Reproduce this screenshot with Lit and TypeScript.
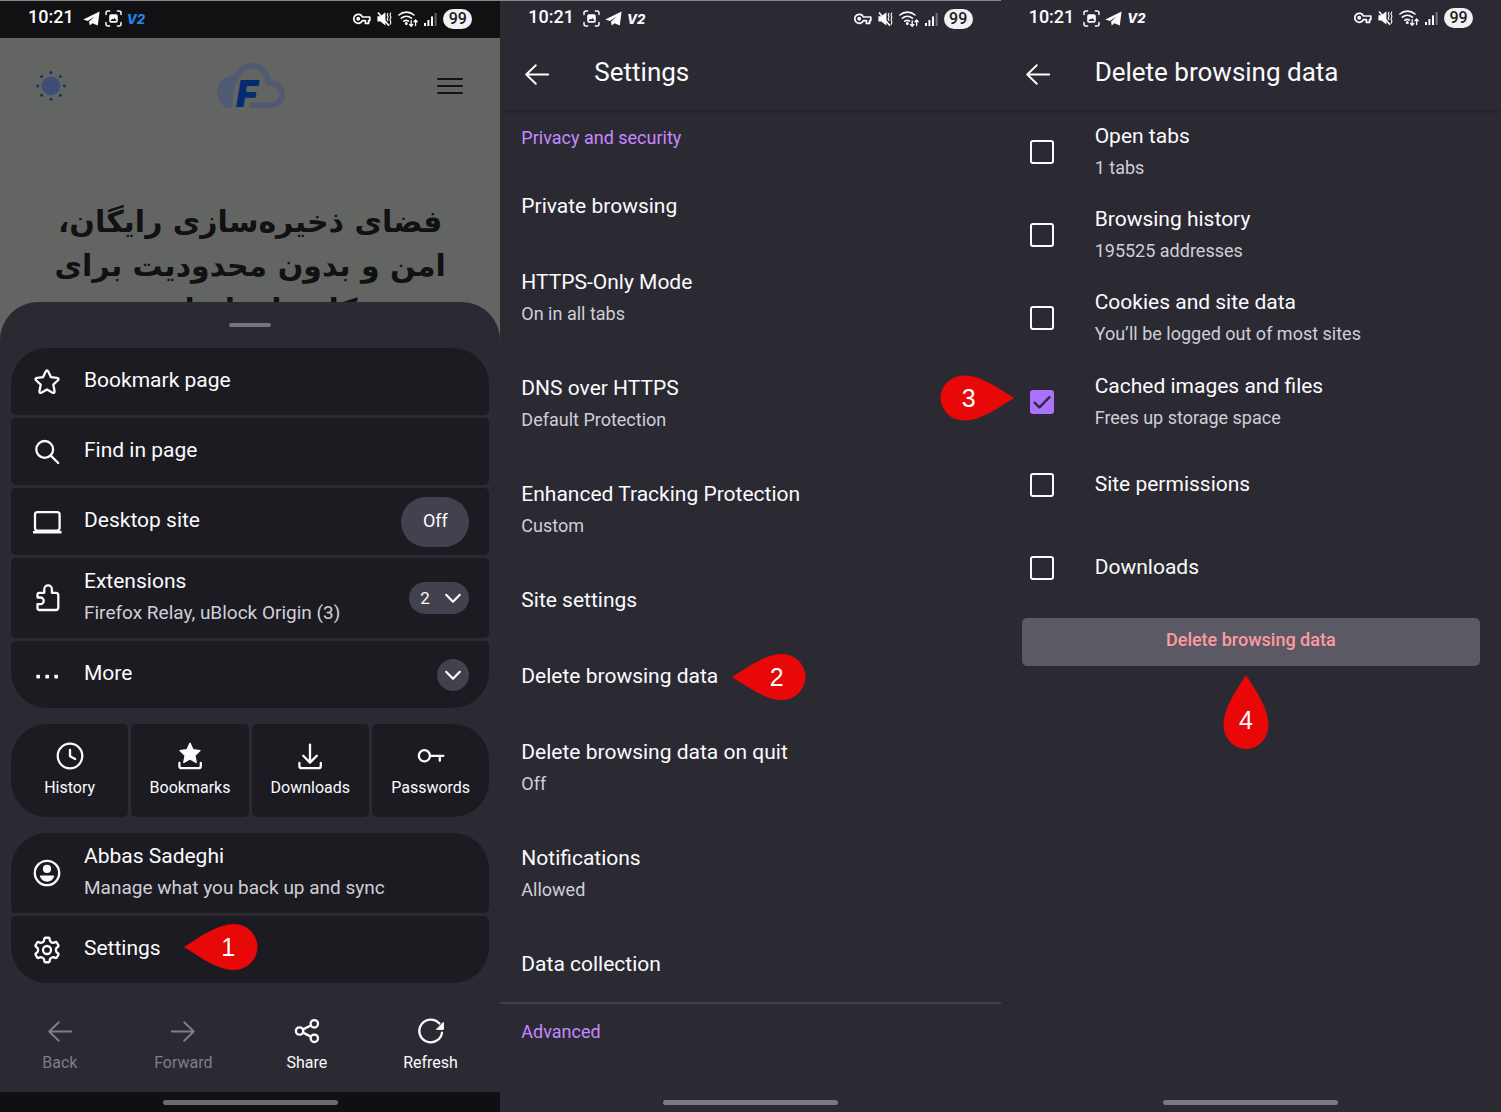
import { LitElement, html, svg, css, nothing, TemplateResult } from "lit";
import { customElement, property, state } from "lit/decorators.js";
import { classMap } from "lit/directives/class-map.js";

function gearPath(): string {
  const points: string[] = [];
  const at = (deg: number, r: number) => {
    const a = (deg * Math.PI) / 180;
    return `${(14 + r * Math.cos(a)).toFixed(2)} ${(14 + r * Math.sin(a)).toFixed(2)}`;
  };
  for (let k = 0; k < 6; k++) {
    const a = k * 60 - 90;
    points.push(`${k ? "L" : "M"}${at(a - 15, 10.8)}`);
    points.push(`Q${at(a - 12, 12.6)} ${at(a - 6, 12.3)}`);
    points.push(`L${at(a + 6, 12.3)}`);
    points.push(`Q${at(a + 12, 12.6)} ${at(a + 15, 10.8)}`);
    points.push(`L${at(a + 18, 9.6)}`);
    points.push(`Q${at(a + 30, 8.2)} ${at(a + 42, 9.6)}`);
  }
  return points.join(" ") + "Z";
}

const ICONS: Record<string, TemplateResult> = {
  star: svg`<path d="M12.6 3.8Q14 1 15.4 3.8L18 9.2L23.8 9.9Q26.8 10.4 24.7 12.5L20.3 16.6L21.5 22.8Q21.9 25.8 19.2 24.4L14 21.5L8.8 24.4Q6.1 25.8 6.5 22.8L7.7 16.6L3.3 12.5Q1.2 10.4 4.2 9.9L10 9.2Z"/>`,
  search: svg`<circle cx="11.7" cy="11.4" r="8.4"/><path d="M17.8 17.6L25.2 25"/>`,
  laptop: svg`<rect x="2" y="4.2" width="24.6" height="18.4" rx="2.5"/><path d="M0 24.2H28.6" stroke-width="2.4" stroke-linecap="butt"/>`,
  puzzle: svg`<path d="M4.5 13.5V10.6Q4.5 8.8 6.3 8.8H11.3V5.2a3.8 3.8 0 0 1 7.6 0V8.8H22.8Q25.3 8.8 25.3 11.2V23.5Q25.3 26 22.8 26H6.5Q4.5 26 4.5 24V20.2H7.4a3.35 3.35 0 0 0 0-6.7Z"/>`,
  dots: svg`<g fill="currentColor" stroke="none"><rect x="3.3" y="13.8" width="3.7" height="3.7" rx="0.7"/><rect x="12.3" y="13.8" width="3.7" height="3.7" rx="0.7"/><rect x="21.3" y="13.8" width="3.7" height="3.7" rx="0.7"/></g>`,
  account: svg`<circle cx="14" cy="14" r="12.2"/><g fill="currentColor" stroke="none"><circle cx="14" cy="9.9" r="4.1"/><path d="M8 16.4H20.2Q21.6 16.4 21.2 17.6Q18.8 22.8 14.1 22.8T6.9 17.6Q6.6 16.4 8 16.4Z"/></g>`,
  gear: svg`<path d=${gearPath()}/><circle cx="14" cy="14" r="4"/>`,
  history: svg`<circle cx="14" cy="14" r="12.3"/><path d="M14 7.8V14.2L19.2 17"/>`,
  bookmarks: svg`<path fill="currentColor" stroke-width="1.4" d="M14 1.2L17 7.8L24 8.6L18.8 13.4L20.2 20.4L14 17L7.8 20.4L9.2 13.4L4 8.6L11 7.8Z"/><path d="M3.4 21V24Q3.4 26.2 5.6 26.2H22.6Q24.8 26.2 24.8 24V21"/>`,
  download: svg`<path d="M14 2.6V20.4M7.2 13.8L14 20.6L20.8 13.8M3.4 21V24Q3.4 26.2 5.6 26.2H22.6Q24.8 26.2 24.8 24V21"/>`,
  key: svg`<circle cx="7.4" cy="13.8" r="5.6"/><path d="M13 13.8H26.4M22.8 13.8V18.8"/>`,
  back: svg`<path stroke-width="1.9" d="M25.2 14.5H3.2M12.8 5.2L3.2 14.5L12.8 23.8"/>`,
  forward: svg`<path stroke-width="1.9" d="M2.8 14.5H24.8M15.2 5.2L24.8 14.5L15.2 23.8"/>`,
  share: svg`<circle cx="6.6" cy="14" r="3.7"/><circle cx="21.3" cy="6.8" r="3.7"/><circle cx="21.3" cy="21.3" r="3.7"/><path d="M10 12.4L17.9 8.5M10 15.6L17.9 19.6"/>`,
  refresh: svg`<path d="M25 15.6A11.4 11.4 0 1 1 22.4 6.6"/><path fill="currentColor" stroke-width="1" d="M26.4 5.6V12.4H19.8Z"/>`,
  chevron: svg`<path stroke-width="2.2" d="M7.2 10.8L14 17.8L20.8 10.8"/>`,
  check: svg`<path stroke-width="2.8" stroke-linecap="butt" d="M4.6 14L11 20.2L23.4 7.6"/>`,
};

const icon = (name: string) => html`<svg class="icon" viewBox="0 0 28 28" aria-hidden="true">${ICONS[name]}</svg>`;

const telegram = html`<svg class="tg" viewBox="0 0 17 15" aria-hidden="true"><path d="M0.2 8.4L16.6 0.4L14.8 14.6L9.4 12.2L6.8 14.6L6 10.8L11.6 5.4L4.8 9.9Z" fill="currentColor"/></svg>`;

const capture = html`<svg class="cap" viewBox="0 0 17 17" aria-hidden="true"><g fill="none" stroke="currentColor" stroke-width="1.5" stroke-linecap="round"><path d="M1 4.6V3Q1 1 3 1H4.6M12.4 1H14Q16 1 16 3V4.6M16 12.4V14Q16 16 14 16H12.4M4.6 16H3Q1 16 1 14V12.4"/></g><path fill="currentColor" fill-rule="evenodd" d="M6 4.2H11Q12.8 4.2 12.8 6V11Q12.8 12.8 11 12.8H6Q4.2 12.8 4.2 11V6Q4.2 4.2 6 4.2ZM5.4 11H11.6L9.6 8L8.2 9.6L7.2 8.8Z"/></svg>`;

const sharedIcon = css`
  .icon {
    display: block;
    flex: none;
    width: 28px;
    height: 28px;
    overflow: visible;
    fill: none;
    stroke: currentColor;
    stroke-width: 2.3;
    stroke-linecap: round;
    stroke-linejoin: round;
  }
`;

@customElement("status-bar")
export class StatusBar extends LitElement {
  @property({ type: Boolean }) browser = false;

  static styles = css`
    :host {
      display: flex;
      justify-content: space-between;
      align-items: center;
      box-sizing: border-box;
      height: 38px;
      padding: 0 28px 2px;
      color: #fbfbfe;
    }
    .side {
      display: flex;
      align-items: center;
      gap: 6px;
    }
    .side.left {
      gap: 5px;
    }
    .time {
      font-size: 18px;
      line-height: 24px;
      font-weight: 500;
      padding: 0 4px 3px 0;
    }
    .tg {
      width: 17px;
      height: 15px;
    }
    .cap {
      width: 17px;
      height: 17px;
    }
    .v2 {
      font: italic 800 13px/16px Inter, sans-serif;
    }
    .v2.accent {
      color: #1f86f5;
    }
    .battery {
      box-sizing: border-box;
      width: 29px;
      height: 20px;
      border-radius: 10px;
      background: #f1f1f3;
      color: #1c1b22;
      font-size: 16px;
      font-weight: 500;
      line-height: 20px;
      text-align: center;
    }
    .glyph {
      height: 18px;
    }
  `;

  render() {
    return html`
      <div class="side left">
        <span class="time">10:21</span>
        ${this.browser ? [telegram, capture] : [capture, telegram]}
        <span class=${classMap({ v2: true, accent: this.browser })}>V2</span>
      </div>
      <div class="side">
        <svg class="glyph" width="18" height="18" viewBox="0 0 18 18" fill="none" stroke="currentColor" stroke-width="1.7" stroke-linejoin="round" aria-hidden="true">
          <path d="M9.4 7H16.8V10.6H15.6V13.4H12.4V10.6H9.4A4.5 4.5 0 1 1 9.4 7Z" />
          <circle cx="5.2" cy="8.8" r="1.1" />
        </svg>
        <svg class="glyph" width="15" height="18" viewBox="0 0 15 18" aria-hidden="true">
          <path fill="currentColor" d="M0.4 6.2H3.4L8.4 2.2V15.4L3.4 11.6H0.4Z" />
          <path fill="none" stroke="currentColor" stroke-width="1.6" d="M1 2.4L12 15.8" />
          <path fill="none" stroke="currentColor" stroke-width="1.1" d="M11.1 3L10.2 5L11.1 7L10.2 9L11.1 11M13.9 2.6L13 5L13.9 7.4L13 9.8L13.9 12.2L13 14.8" />
        </svg>
        <svg class="glyph" width="20" height="18" viewBox="0 0 20 18" fill="none" stroke="currentColor" stroke-width="1.6" stroke-linecap="round" aria-hidden="true">
          <path d="M0.9 5A11.4 11.4 0 0 1 16 5M3.4 8.2A7.8 7.8 0 0 1 13.4 8.2M5.8 11.2A4.2 4.2 0 0 1 10.4 11" />
          <circle cx="8.3" cy="13.6" r="0.7" fill="currentColor" />
          <path stroke-width="1.3" d="M13.2 10.6V16M11.6 14.5L13.2 16.2L14.8 14.5M17.6 15.6V10.4M16 11.8L17.6 10L19.2 11.8" />
        </svg>
        <svg class="glyph" width="13" height="18" viewBox="0 0 13 18" fill="currentColor" aria-hidden="true">
          <rect x="0" y="13" width="2" height="3" />
          <rect x="3.4" y="10" width="2" height="6" />
          <rect x="7" y="6.4" width="2" height="9.6" />
          <rect x="10.6" y="3" width="2" height="13" opacity="0.35" />
        </svg>
        <span class="battery">99</span>
      </div>
    `;
  }
}

@customElement("callout-pin")
export class CalloutPin extends LitElement {
  @property() label = "";
  @property({ reflect: true }) point: "left" | "right" | "up" = "left";

  static styles = css`
    :host {
      display: block;
      position: relative;
      width: 74px;
      height: 46px;
    }
    :host([point="up"]) {
      width: 46px;
      height: 74px;
    }
    svg {
      display: block;
      width: 100%;
      height: 100%;
      fill: #e80808;
    }
    span {
      position: absolute;
      inset: 0 0 0 15px;
      display: grid;
      place-items: center;
      font: 25px/28px "Liberation Sans", Arial, sans-serif;
      color: #fff;
    }
    :host([point="right"]) span {
      inset: 0 16px 0 0;
    }
    :host([point="up"]) span {
      inset: 16px 0 0 0;
    }
  `;

  render() {
    const shapes = {
      left: ["0 0 74 46", "M0 23C16 13 33 0 50 0A23.5 23 0 0 1 50 46C33 46 16 33 0 23Z"],
      right: ["0 0 74 46", "M74 23C58 13 41 0.5 24 0.5A23.5 22.5 0 0 0 24 45.5C41 45.5 58 33 74 23Z"],
      up: ["0 0 46 74", "M23 0C33 16 45.5 33 45.5 50A22.5 24 0 0 1 0.5 50C0.5 33 13 16 23 0Z"],
    };
    const [box, d] = shapes[this.point];
    return html`<svg viewBox=${box} aria-hidden="true"><path d=${d} /></svg><span>${this.label}</span>`;
  }
}

interface MenuRow {
  icon: string;
  title: string;
  note?: string;
  control?: "off" | "count" | "more";
  pin?: string;
}

@customElement("browser-menu")
export class BrowserMenu extends LitElement {
  private page: MenuRow[] = [
    { icon: "star", title: "Bookmark page" },
    { icon: "search", title: "Find in page" },
    { icon: "laptop", title: "Desktop site", control: "off" },
    { icon: "puzzle", title: "Extensions", note: "Firefox Relay, uBlock Origin (3)", control: "count" },
    { icon: "dots", title: "More", control: "more" },
  ];
  private account: MenuRow[] = [
    { icon: "account", title: "Abbas Sadeghi", note: "Manage what you back up and sync" },
    { icon: "gear", title: "Settings", pin: "1" },
  ];
  private library = [
    ["history", "History"],
    ["bookmarks", "Bookmarks"],
    ["download", "Downloads"],
    ["key", "Passwords"],
  ];
  private tools: [string, string, boolean][] = [
    ["back", "Back", true],
    ["forward", "Forward", true],
    ["share", "Share", false],
    ["refresh", "Refresh", false],
  ];

  static styles = [
    sharedIcon,
    css`
      :host {
        display: flex;
        flex-direction: column;
        background: #636563;
      }
      button {
        appearance: none;
        border: 0;
        margin: 0;
        padding: 0;
        background: none;
        font: inherit;
        color: inherit;
        text-align: left;
      }
      status-bar {
        background: #111113;
        border-top: 1px solid #88888c;
      }
      .site {
        height: 302px;
        margin-bottom: -38px;
        overflow: hidden;
        color: #111012;
      }
      .site-head {
        display: flex;
        align-items: center;
        justify-content: space-between;
        padding: 25px 36px 0;
        height: 46px;
      }
      .site-head svg {
        display: block;
        overflow: visible;
      }
      .logo text {
        font: italic 900 37px/40px Inter, sans-serif;
        fill: #042a72;
      }
      h1 {
        margin: 91px 0 0;
        font: 700 30px/44px "DejaVu Sans", sans-serif;
        text-align: center;
      }
      h1 span {
        display: block;
        white-space: nowrap;
      }
      .sheet {
        flex: 1;
        display: flex;
        flex-direction: column;
        gap: 16px;
        position: relative;
        padding: 21px 11px 0;
        border-radius: 38px 38px 0 0;
        background: #2b2a33;
        color: #fbfbfe;
      }
      .handle {
        align-self: center;
        width: 42px;
        height: 4px;
        margin-bottom: 5px;
        border-radius: 2px;
        background: #75747f;
      }
      .group {
        display: flex;
        flex-direction: column;
        gap: 3px;
        border-radius: 36px;
        overflow: hidden;
      }
      .group.across {
        display: grid;
        grid-template-columns: repeat(4, 1fr);
      }
      .row {
        display: flex;
        align-items: center;
        min-height: 67px;
        padding: 0 20px 0 22px;
        box-sizing: border-box;
        gap: 23px;
        border-radius: 5px;
        background: #1c1b22;
      }
      .row.tall {
        min-height: 80px;
      }
      .open {
        flex: 1;
        display: flex;
        align-items: center;
        gap: 23px;
      }
      .text {
        display: flex;
        flex-direction: column;
        padding-bottom: 3px;
      }
      .title {
        font-size: 21px;
        line-height: 32px;
      }
      .note {
        font-size: 19px;
        line-height: 32px;
        color: #cfcfd8;
      }
      .anchor {
        position: relative;
        align-self: flex-start;
      }
      callout-pin {
        position: absolute;
        left: calc(100% + 23px);
        top: -8px;
      }
      .pill {
        display: flex;
        align-items: center;
        justify-content: center;
        background: #42414d;
      }
      .pill.off {
        width: 68px;
        height: 50px;
        padding-bottom: 3px;
        box-sizing: border-box;
        border-radius: 25px;
        font-size: 18px;
      }
      .pill.count {
        justify-content: space-between;
        box-sizing: border-box;
        width: 60px;
        height: 32px;
        padding: 0 2px 0 11px;
        border-radius: 16px;
        font-size: 17px;
      }
      .pill.more {
        width: 32px;
        height: 32px;
        border-radius: 16px;
      }
      .tile {
        display: flex;
        flex-direction: column;
        align-items: center;
        height: 93px;
        padding-top: 18px;
        box-sizing: border-box;
        gap: 6px;
        border-radius: 5px;
        background: #1c1b22;
        font-size: 16px;
        line-height: 24px;
      }
      .toolbar {
        display: grid;
        grid-template-columns: repeat(4, 1fr);
        margin: 18px -3px 0 -13px;
      }
      .tool {
        display: flex;
        flex-direction: column;
        align-items: center;
        gap: 6px;
        padding-bottom: 17px;
        font-size: 16px;
        line-height: 24px;
      }
      .tool:disabled {
        color: #7f7e87;
      }
      .nav {
        display: flex;
        justify-content: center;
        align-items: center;
        height: 20px;
        background: #101012;
      }
      .nav::before {
        content: "";
        width: 35%;
        height: 5px;
        border-radius: 3px;
        background: #6b6b6d;
      }
    `,
  ];

  private control(kind?: string) {
    if (kind === "off") return html`<button class="pill off">Off</button>`;
    if (kind === "count") return html`<button class="pill count" aria-label="2 extensions">2 ${icon("chevron")}</button>`;
    if (kind === "more") return html`<button class="pill more" aria-label="More">${icon("chevron")}</button>`;
    return nothing;
  }

  private row(r: MenuRow) {
    return html`<div class=${classMap({ row: true, tall: !!r.note })}>
      <button class="open">
        ${icon(r.icon)}
        <span class="text">
          <span class="title anchor">${r.title}${r.pin ? html`<callout-pin point="left" label=${r.pin}></callout-pin>` : nothing}</span>
          ${r.note ? html`<span class="note">${r.note}</span>` : nothing}
        </span>
      </button>
      ${this.control(r.control)}
    </div>`;
  }

  render() {
    const rays = [0, 45, 90, 135, 180, 225, 270, 315].map((d) => {
      const a = (d * Math.PI) / 180;
      return svg`<circle cx=${15 + 13.3 * Math.cos(a)} cy=${15 + 13.3 * Math.sin(a)} r="1.4" fill="#0a2d72"/>`;
    });
    return html`
      <status-bar browser></status-bar>
      <section class="site">
        <div class="site-head">
          <button aria-label="Theme">
            <svg width="30" height="30" viewBox="0 0 30 30"><circle cx="15" cy="15" r="9.3" fill="#3e4e74" />${rays}</svg>
          </button>
          <svg class="logo" width="68" height="46" viewBox="0 0 68 46" role="img" aria-label="F cloud">
            <path d="M19.6 12.4C8 12 0 19 0 29C0 38 6 45 13 45Q14.8 45 15 43.4Z" fill="#505a72" />
            <path d="M18.4 15.6C21.6 7.4 27.6 3 34.6 3C43.4 3 50.4 9.4 51.4 20C59 19.4 65 24.6 65 31.4C65 38 60 42.2 54 42.2H35" fill="none" stroke="#505a72" stroke-width="5.6" stroke-linecap="round" stroke-linejoin="round" />
            <text x="19" y="44.4">F</text>
          </svg>
          <button aria-label="Menu">
            <svg width="28" height="18" viewBox="0 0 28 18" fill="none" stroke="#131314" stroke-width="2" stroke-linecap="round"><path d="M2 2H26M2 9H26M2 16H26" /></svg>
          </button>
        </div>
        <h1 dir="rtl" lang="fa">
          <span>فضای ذخیره‌سازی رایگان،</span>
          <span>امن و بدون محدودیت برای</span>
          <span>کاربران ایرانی</span>
        </h1>
      </section>
      <section class="sheet">
        <div class="handle"></div>
        <div class="group">${this.page.map((r) => this.row(r))}</div>
        <div class="group across">
          ${this.library.map(([name, label]) => html`<button class="tile">${icon(name)}<span>${label}</span></button>`)}
        </div>
        <div class="group">${this.account.map((r) => this.row(r))}</div>
        <div class="toolbar">
          ${this.tools.map(([name, label, off]) => html`<button class="tool" ?disabled=${off}>${icon(name)}<span>${label}</span></button>`)}
        </div>
      </section>
      <div class="nav"></div>
    `;
  }
}

const screenStyles = css`
  :host {
    display: flex;
    flex-direction: column;
    background: #2b2a33;
    color: #fbfbfe;
  }
  header {
    display: flex;
    align-items: center;
    gap: 43px;
    height: 72px;
    padding: 0 23px;
  }
  header button {
    appearance: none;
    border: 0;
    padding: 0;
    background: none;
    color: inherit;
  }
  h2 {
    margin: 0;
    padding-bottom: 4px;
    font-size: 26px;
    line-height: 32px;
    font-weight: 400;
  }
  main {
    flex: 1;
    background: linear-gradient(#26252d, #2b2a33 6px);
  }
  .title {
    font-size: 21px;
    line-height: 34px;
  }
  .note {
    font-size: 18px;
    line-height: 30px;
    color: #cfcfd8;
  }
  .nav {
    display: flex;
    justify-content: center;
    align-items: center;
    height: 20px;
  }
  .nav::before {
    content: "";
    width: 35%;
    height: 5px;
    border-radius: 3px;
    background: #7b7a80;
  }
`;

interface Setting {
  title: string;
  note?: string;
  pin?: string;
}

@customElement("settings-screen")
export class SettingsScreen extends LitElement {
  private settings: Setting[] = [
    { title: "Private browsing" },
    { title: "HTTPS-Only Mode", note: "On in all tabs" },
    { title: "DNS over HTTPS", note: "Default Protection" },
    { title: "Enhanced Tracking Protection", note: "Custom" },
    { title: "Site settings" },
    { title: "Delete browsing data", pin: "2" },
    { title: "Delete browsing data on quit", note: "Off" },
    { title: "Notifications", note: "Allowed" },
    { title: "Data collection" },
  ];

  static styles = [
    sharedIcon,
    screenStyles,
    css`
      status-bar {
        border-top: 1px solid #88888c;
      }
      h3 {
        margin: 0;
        padding: 16px 21px 18px;
        font-size: 18px;
        line-height: 24px;
        font-weight: 400;
        color: #c689ff;
      }
      .setting {
        display: flex;
        flex-direction: column;
        align-items: flex-start;
        width: 100%;
        padding: 21px;
        border: 0;
        background: none;
        font: inherit;
        color: inherit;
        text-align: left;
      }
      .title {
        position: relative;
      }
      callout-pin {
        position: absolute;
        left: calc(100% + 14px);
        top: -5px;
      }
      .advanced {
        border-top: 2px solid #42414d;
      }
    `,
  ];

  render() {
    return html`
      <status-bar></status-bar>
      <header>
        <button aria-label="Back">${icon("back")}</button>
        <h2>Settings</h2>
      </header>
      <main>
        <h3>Privacy and security</h3>
        ${this.settings.map(
          (s) => html`<button class="setting">
            <span class="title">${s.title}${s.pin ? html`<callout-pin point="left" label=${s.pin}></callout-pin>` : nothing}</span>
            ${s.note ? html`<span class="note">${s.note}</span>` : nothing}
          </button>`
        )}
        <h3 class="advanced">Advanced</h3>
      </main>
      <div class="nav"></div>
    `;
  }
}

interface DataKind {
  id: string;
  title: string;
  note?: string;
  checked?: boolean;
  pin?: string;
}

@customElement("delete-screen")
export class DeleteScreen extends LitElement {
  @state() private kinds: DataKind[] = [
    { id: "tabs", title: "Open tabs", note: "1 tabs" },
    { id: "history", title: "Browsing history", note: "195525 addresses" },
    { id: "cookies", title: "Cookies and site data", note: "You’ll be logged out of most sites" },
    { id: "cache", title: "Cached images and files", note: "Frees up storage space", checked: true, pin: "3" },
    { id: "permissions", title: "Site permissions" },
    { id: "downloads", title: "Downloads" },
  ];

  static styles = [
    sharedIcon,
    screenStyles,
    css`
      .kinds {
        display: grid;
        grid-auto-rows: 1fr;
        min-height: 500px;
      }
      .kind {
        position: relative;
        display: flex;
        align-items: center;
        gap: 41px;
        padding: 0 29px;
      }
      .box {
        display: grid;
        place-items: center;
      }
      .box > * {
        grid-area: 1 / 1;
      }
      input {
        appearance: none;
        box-sizing: border-box;
        width: 24px;
        height: 24px;
        margin: 0;
        border: 2px solid #fbfbfe;
        border-radius: 3px;
      }
      input:checked {
        border-color: #ab71ff;
        background: #ab71ff;
      }
      .box .icon {
        width: 24px;
        height: 24px;
        color: #2b2a33;
        pointer-events: none;
      }
      .text {
        display: flex;
        flex-direction: column;
        padding-bottom: 2px;
      }
      .kind callout-pin {
        position: absolute;
        right: calc(100% - 13px);
        top: 15px;
      }
      .confirm {
        position: relative;
        display: flex;
        padding: 8px 21px;
      }
      .confirm button {
        flex: 1;
        height: 48px;
        padding: 0 0 5px;
        border: 0;
        border-radius: 5px;
        background: #5b5a64;
        font: inherit;
        font-size: 18px;
        font-weight: 500;
        color: #ff9aa2;
      }
      .confirm callout-pin {
        position: absolute;
        left: calc(50% - 28px);
        top: 65px;
      }
    `,
  ];

  private toggle(id: string) {
    this.kinds = this.kinds.map((k) => (k.id === id ? { ...k, checked: !k.checked } : k));
  }

  render() {
    return html`
      <status-bar></status-bar>
      <header>
        <button aria-label="Back">${icon("back")}</button>
        <h2>Delete browsing data</h2>
      </header>
      <main>
        <div class="kinds">
          ${this.kinds.map(
            (k) => html`<label class="kind" for=${k.id}>
              <span class="box">
                <input type="checkbox" id=${k.id} .checked=${!!k.checked} @change=${() => this.toggle(k.id)} />
                ${k.checked ? icon("check") : nothing}
              </span>
              <span class="text">
                <span class="title">${k.title}</span>
                ${k.note ? html`<span class="note">${k.note}</span>` : nothing}
              </span>
              ${k.pin ? html`<callout-pin point="right" label=${k.pin}></callout-pin>` : nothing}
            </label>`
          )}
        </div>
        <div class="confirm">
          <button>Delete browsing data</button>
          <callout-pin point="up" label="4"></callout-pin>
        </div>
      </main>
      <div class="nav"></div>
    `;
  }
}

@customElement("app-root")
export class AppRoot extends LitElement {
  static styles = css`
    :host {
      display: grid;
      grid-template-columns: repeat(3, minmax(0, 1fr));
      min-height: 100vh;
      background: #2b2a33;
      font-family: Roboto, "Liberation Sans", sans-serif;
    }
  `;

  render() {
    return html`
      <browser-menu></browser-menu>
      <settings-screen></settings-screen>
      <delete-screen></delete-screen>
    `;
  }
}
